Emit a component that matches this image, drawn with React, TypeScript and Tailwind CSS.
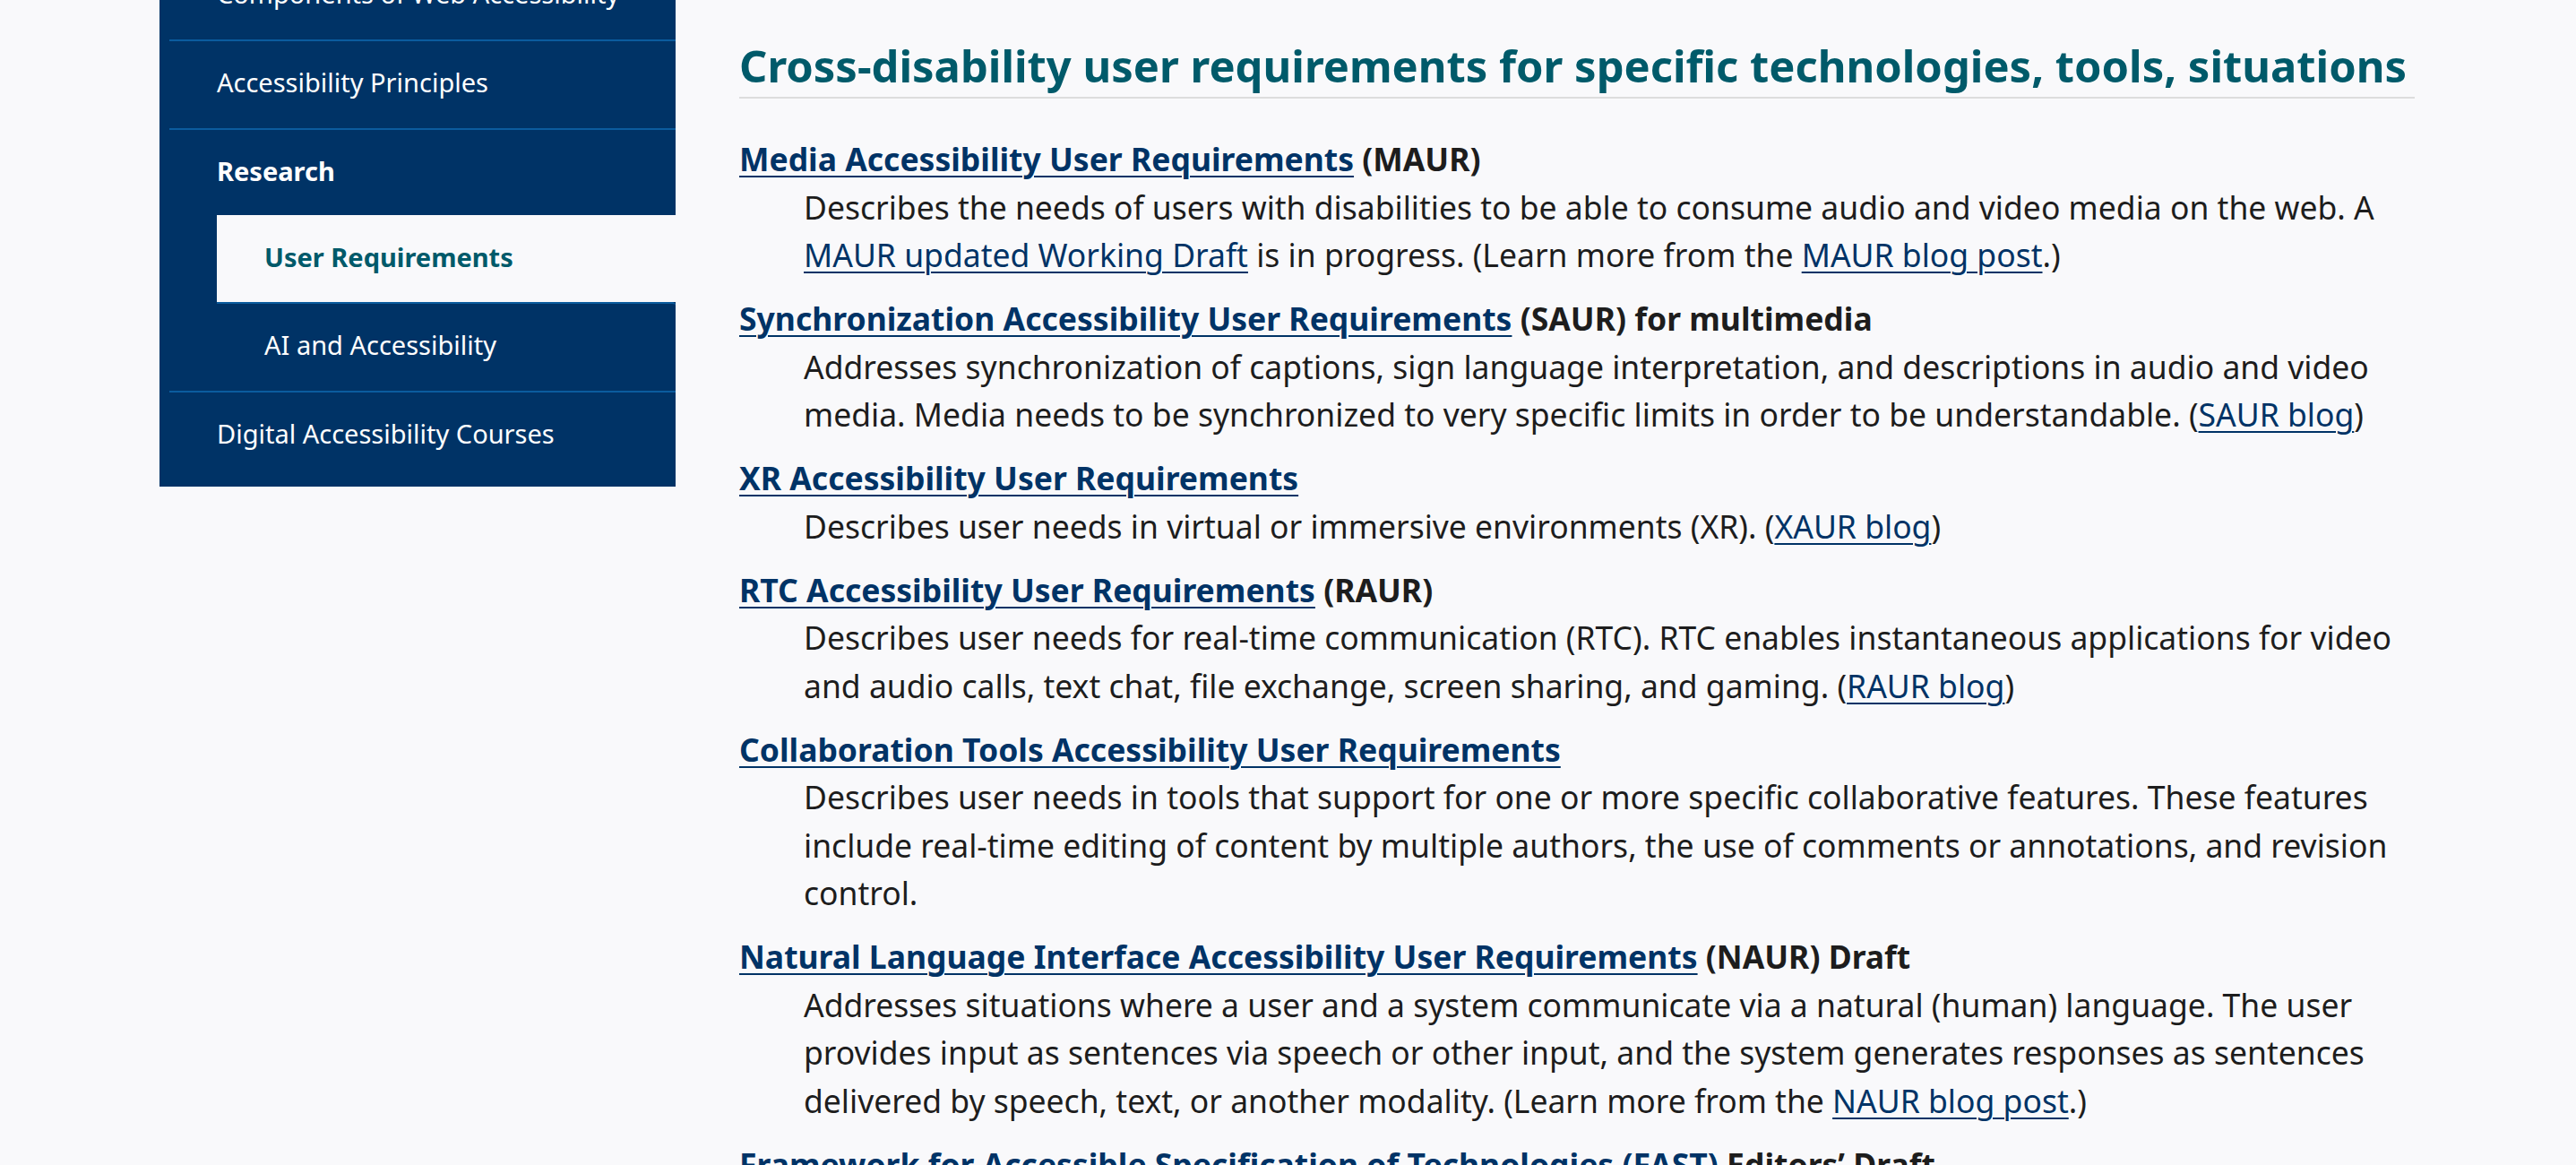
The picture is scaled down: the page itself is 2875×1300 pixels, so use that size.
import React from "react";

const L = ({ children }: { children: React.ReactNode }) => (
  <a href="#" className="text-[#003366] underline decoration-2 underline-offset-[5px]">
    {children}
  </a>
);

type Entry = { title: string; suffix?: string; body?: React.ReactNode };

const entries: Entry[] = [
  {
    title: "Media Accessibility User Requirements",
    suffix: " (MAUR)",
    body: (
      <>
        Describes the needs of users with disabilities to be able to consume audio and video media on the web. A{" "}
        <L>MAUR updated Working Draft</L> is in progress. (Learn more from the <L>MAUR blog post</L>.)
      </>
    ),
  },
  {
    title: "Synchronization Accessibility User Requirements",
    suffix: " (SAUR) for multimedia",
    body: (
      <>
        Addresses synchronization of captions, sign language interpretation, and descriptions in audio and video media.
        Media needs to be synchronized to very specific limits in order to be understandable. (<L>SAUR blog</L>)
      </>
    ),
  },
  {
    title: "XR Accessibility User Requirements",
    body: (
      <>
        Describes user needs in virtual or immersive environments (XR). (<L>XAUR blog</L>)
      </>
    ),
  },
  {
    title: "RTC Accessibility User Requirements",
    suffix: " (RAUR)",
    body: (
      <>
        Describes user needs for real-time communication (RTC). RTC enables instantaneous applications for video and
        audio calls, text chat, file exchange, screen sharing, and gaming. (<L>RAUR blog</L>)
      </>
    ),
  },
  {
    title: "Collaboration Tools Accessibility User Requirements",
    body: (
      <>
        Describes user needs in tools that support for one or more specific collaborative features. These features
        include real-time editing of content by multiple authors, the use of comments or annotations, and revision
        control.
      </>
    ),
  },
  {
    title: "Natural Language Interface Accessibility User Requirements",
    suffix: " (NAUR) Draft",
    body: (
      <>
        Addresses situations where a user and a system communicate via a natural (human) language. The user provides
        input as sentences via speech or other input, and the system generates responses as sentences delivered by
        speech, text, or another modality. (Learn more from the <L>NAUR blog post</L>.)
      </>
    ),
  },
  {
    title: "Framework for Accessible Specification of Technologies (FAST)",
    suffix: " Editors\u2019 Draft",
  },
];

function NavLink({ children, bold = false }: { children: React.ReactNode; bold?: boolean }) {
  return (
    <a href="#" className={`flex h-[97px] items-center pb-[6px] pl-[53px] text-white ${bold ? "font-bold" : ""}`}>
      {children}
    </a>
  );
}

export default function App() {
  return (
    <div className="h-[1300px] w-full overflow-hidden bg-[#f9f9fb] font-['Noto_Sans',sans-serif] text-[#1d1d1d]">
      <div className="flex items-start pl-[178px]">
        {/* Sidebar */}
        <nav className="mt-[-53px] w-[576px] shrink-0 bg-[#003366] pb-[8px] text-[29px] leading-[40px]">
          <ul className="pl-[11px]">
            <li>
              <NavLink>Components of Web Accessibility</NavLink>
            </li>
            <li className="border-t-2 border-[#0b5c9e]">
              <NavLink>Accessibility Principles</NavLink>
            </li>
            <li className="border-t-2 border-[#0b5c9e]">
              <a href="#" className="flex h-[95px] items-center rounded-br-[4px] pb-[4px] pl-[53px] font-bold text-white">
                Research
              </a>
              <ul className="ml-[53px]">
                <li className="bg-[#f9f9fb]">
                  <a href="#" className="flex h-[97px] items-center pb-[4px] pl-[53px] font-bold text-[#005a6a]">
                    User Requirements
                  </a>
                </li>
                <li className="rounded-tr-[4px] border-t-2 border-[#0b5c9e]">
                  <NavLink>AI and Accessibility</NavLink>
                </li>
              </ul>
            </li>
            <li className="border-t-2 border-[#0b5c9e]">
              <NavLink>Digital Accessibility Courses</NavLink>
            </li>
          </ul>
        </nav>

        {/* Main content */}
        <main className="ml-[71px] w-[1870px] shrink-0">
          <h2 className="mt-[43px] whitespace-nowrap border-b-2 border-[#dddddd] pb-[5px] text-[48.9px] font-bold leading-[60px] text-[#005a6a]">
            Cross-disability user requirements for specific technologies, tools, situations
          </h2>
          <dl className="mt-[41px] text-[35.5px] leading-[53.5px]">
            {entries.map((e) => (
              <React.Fragment key={e.title}>
                <dt className="font-bold">
                  <L>{e.title}</L>
                  {e.suffix}
                </dt>
                {e.body && <dd className="mb-[17.5px] ml-[72px]">{e.body}</dd>}
              </React.Fragment>
            ))}
          </dl>
        </main>
      </div>
    </div>
  );
}
